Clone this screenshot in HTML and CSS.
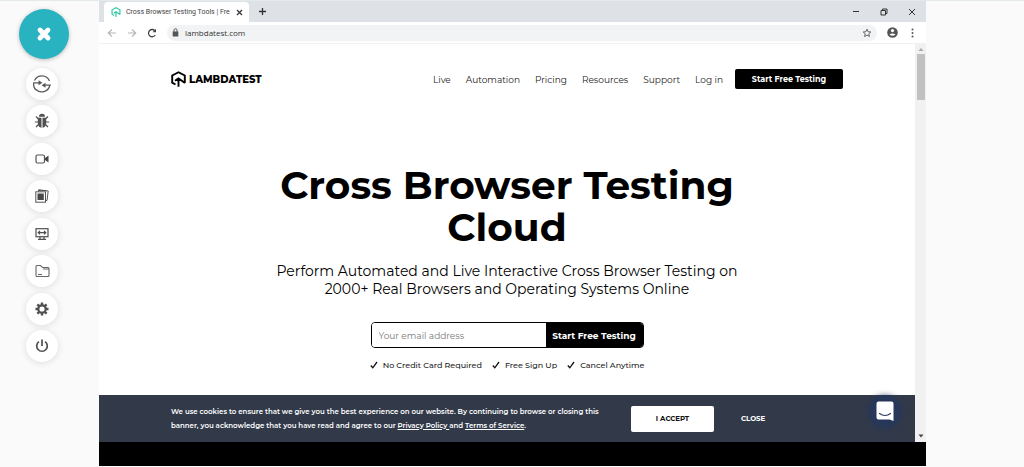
FILE: index.html
```html
<!DOCTYPE html>
<html lang="en">
<head>
<meta charset="utf-8">
<meta name="viewport" content="width=device-width, initial-scale=1">
<title>Live testing session</title>
<link rel="stylesheet" href="styles.css">
</head>
<body>
<div class="session">
  <aside class="rail">
    <button class="toggle" aria-label="Close menu"><svg width="16" height="16" viewBox="0 0 16 16"><path d="M4 4l8 8M12 4l-8 8" stroke="#fff" stroke-width="4.800" stroke-linecap="round"/></svg></button>
    <div class="tools">
      <button class="tool" aria-label="Switch"><svg width="20" height="20" viewBox="0 0 20 20" fill="none" stroke="#5a5a5a" stroke-width="1.300"><path d="M2.500 6.500A8.200 8.200 0 0 1 17.500 7M1.200 8.800H7M18.800 11.200H13M1.700 9A8.200 8.200 0 0 0 4 16M17.800 11.500A8.200 8.200 0 0 1 4 15.500"/><path d="M6.500 6.300l4 2.500-4 2.500zM13.500 13.700l-4-2.500 4-2.500z" fill="#5a5a5a" stroke="none"/></svg></button>
      <button class="tool" aria-label="Report bug"><svg width="16" height="16" viewBox="0 0 16 16"><path d="M5 3.800a3 3 0 0 1 6 0zM3.800 4.700h3.700v10C5 14.500 3.800 12.500 3.800 10zM8.500 4.700h3.700V10c0 2.500-1.200 4.500-3.700 4.700z" fill="#505050"/><path d="M4.500 6L2 3.500M4 9H.8M4.500 11.500L2 14M11.500 6L14 3.500M12 9h3.200M11.500 11.500L14 14" stroke="#505050" stroke-width="1.200"/></svg></button>
      <button class="tool" aria-label="Record video"><svg width="14" height="14" viewBox="0 0 14 14"><rect x="1" y="3" width="8.500" height="8" rx="1.500" fill="none" stroke="#555" stroke-width="1.200"/><path d="M10 6l3.500-2.500v7L10 8z" fill="#484848"/></svg></button>
      <button class="tool" aria-label="Gallery"><svg width="14" height="14" viewBox="0 0 14 14" fill="none" stroke="#555"><path d="M3.500 2.500V.8L13.200 2 12 11.500h-1M3 1.500h8.500"/><rect x=".8" y="2.800" width="9.700" height="10.400"/><path d="M2.500 4.500h6.300v6.500H2.500z" fill="#484848" stroke="none"/></svg></button>
      <button class="tool" aria-label="Resolution"><svg width="14" height="14" viewBox="0 0 14 14" fill="none" stroke="#505050" stroke-width="1.200"><rect x="1" y="1.700" width="12" height="8"/><path d="M3 5.700h8M5 4L3.200 5.700 5 7.400M9 4l1.800 1.700L9 7.400M5 9.500v2.300M9 9.500v2.300M3 12.300h8"/></svg></button>
      <button class="tool" aria-label="Files"><svg width="15" height="14" viewBox="0 0 15 14" fill="none" stroke="#666" stroke-width="1.100"><path d="M1 11.500V2.500q0-1 1-1h3.500l2 2h5.500q1 0 1 1v7q0 1-1 1H2q-1 0-1-1zM8 5h5.500M3 10.500h4"/></svg></button>
      <button class="tool" aria-label="Settings"><svg width="14" height="14" viewBox="0 0 14 14" fill="none" stroke="#505050"><circle cx="7" cy="7" r="3.700" stroke-width="2.200"/><path d="M7 .5v2.500M7 11v2.500M.5 7H3M11 7h2.500M2.400 2.400l1.800 1.800M9.800 9.800l1.800 1.800M11.600 2.400L9.800 4.200M4.200 9.800l-1.800 1.800" stroke-width="2.400"/></svg></button>
      <button class="tool" aria-label="End session"><svg width="14" height="14" viewBox="0 0 14 14" fill="none" stroke="#505050" stroke-width="1.700"><path d="M4 2.600a5.300 5.300 0 1 0 6 0M7 .5v6.500"/></svg></button>
    </div>
  </aside>

  <div class="browser">
    <div class="tabstrip">
      <div class="tab">
        <svg width="10" height="10" viewBox="0 0 15 16" fill="none" stroke="#35c9a5" stroke-width="2"><path d="M4.500 13.500L1.200 11.600V4.500L7.500 1.200l6.300 3.300v7.500M7.500 15.800V8M4 9.800l3.500-2.300 6.500 4.500"/></svg>
        <span class="tab-title">Cross Browser Testing Tools | Fre</span>
        <button class="plain" aria-label="Close tab"><svg width="7" height="7" viewBox="0 0 7 7"><path d="M1 1l5 5M6 1L1 6" stroke="#333" stroke-width="1.200"/></svg></button>
      </div>
      <button class="plain new-tab" aria-label="New tab"><svg width="9" height="9" viewBox="0 0 9 9"><path d="M4.500 1v7M1 4.500h7" stroke="#333" stroke-width="1.300"/></svg></button>
      <div class="window-controls">
        <button class="plain" aria-label="Minimize"><svg width="8" height="8" viewBox="0 0 8 8"><path d="M1 3.500h6" stroke="#333"/></svg></button>
        <button class="plain" aria-label="Restore"><svg width="8" height="8" viewBox="0 0 8 8" fill="none" stroke="#333"><path d="M1 2.500h4.500v4.500H1zM2.500 2.500V1H7v4.500H5.500"/></svg></button>
        <button class="plain" aria-label="Close"><svg width="8" height="8" viewBox="0 0 8 8"><path d="M1 1l6 6M7 1L1 7" stroke="#333"/></svg></button>
      </div>
    </div>
    <div class="toolbar">
      <button class="plain" aria-label="Back"><svg width="10" height="10" viewBox="0 0 10 10" fill="none" stroke="#b5b5b5" stroke-width="1.200"><path d="M9 5H1.500M5 1.300L1.300 5 5 8.700"/></svg></button>
      <button class="plain" aria-label="Forward"><svg width="10" height="10" viewBox="0 0 10 10" fill="none" stroke="#b5b5b5" stroke-width="1.200"><path d="M1 5h7.500M5 1.300L8.700 5 5 8.700"/></svg></button>
      <button class="plain" aria-label="Reload"><svg width="10" height="10" viewBox="0 0 10 10"><path d="M8.200 7A3.600 3.600 0 1 1 7.800 2.700" fill="none" stroke="#444" stroke-width="1.300"/><path d="M9 .8v3.400H5.600z" fill="#444"/></svg></button>
      <div class="address">
        <svg width="7" height="9" viewBox="0 0 7 9"><rect x=".7" y="3.500" width="5.600" height="5" fill="#555"/><path d="M2 4V2.300a1.500 1.500 0 0 1 3 0V4" fill="none" stroke="#555"/></svg>
        <input class="url" type="text" value="lambdatest.com" aria-label="Address">
        <button class="plain" aria-label="Bookmark"><svg width="10" height="10" viewBox="0 0 10 10"><path d="M5 1.200l1.100 2.500 2.700.3-2 1.800.6 2.700L5 7.100 2.600 8.500l.6-2.700-2-1.800 2.700-.3z" fill="none" stroke="#555" stroke-width=".9"/></svg></button>
      </div>
      <div class="toolbar-end">
        <button class="plain" aria-label="Profile"><svg width="11" height="11" viewBox="0 0 11 11"><circle cx="5.500" cy="5.500" r="5.300" fill="#555"/><circle cx="5.500" cy="3.600" r="1.600" fill="#fff"/><path d="M2.500 7.500q3-2 6 0-3 2.500-6 0" fill="#fff"/></svg></button>
        <button class="plain" aria-label="Menu"><svg width="3" height="10" viewBox="0 0 3 10" fill="#555"><circle cx="1.500" cy="1.500" r="1"/><circle cx="1.500" cy="5" r="1"/><circle cx="1.500" cy="8.500" r="1"/></svg></button>
      </div>
    </div>

    <div class="viewport">
      <div class="page">
        <header class="wrap header">
          <a class="logo" href="#"><svg width="15" height="16" viewBox="0 0 15 16" fill="none" stroke="#000" stroke-width="1.900"><path d="M4.500 13.500L1.200 11.600V4.500L7.500 1.200l6.300 3.300v7.500M7.500 15.800V8M4 9.800l3.500-2.300 6.500 4.500"/></svg>LAMBDATEST</a>
          <nav class="nav">
            <a href="#">Live</a><a href="#">Automation</a><a href="#">Pricing</a><a href="#">Resources</a><a href="#">Support</a><a href="#">Log in</a>
          </nav>
          <a class="cta" href="#">Start Free Testing</a>
        </header>
        <main class="hero">
          <h1>Cross Browser Testing<br>Cloud</h1>
          <p class="lead">Perform Automated and Live Interactive Cross Browser Testing on<br>2000+ Real Browsers and Operating Systems Online</p>
          <form class="signup">
            <input type="email" placeholder="Your email address" aria-label="Your email address">
            <button type="button">Start Free Testing</button>
          </form>
          <ul class="perks">
            <li><svg width="8" height="8" viewBox="0 0 8 8"><path d="M.8 4.500l2 2.300L7 1" fill="none" stroke="#111" stroke-width="1.300"/></svg>No Credit Card Required</li>
            <li><svg width="8" height="8" viewBox="0 0 8 8"><path d="M.8 4.500l2 2.300L7 1" fill="none" stroke="#111" stroke-width="1.300"/></svg>Free Sign Up</li>
            <li><svg width="8" height="8" viewBox="0 0 8 8"><path d="M.8 4.500l2 2.300L7 1" fill="none" stroke="#111" stroke-width="1.300"/></svg>Cancel Anytime</li>
          </ul>
        </main>
        <section class="cookies">
          <div class="wrap cookie-row">
            <p>We use cookies to ensure that we give you the best experience on our website. By continuing to browse or closing this<br>banner, you acknowledge that you have read and agree to our <a href="#">Privacy Policy </a>and <a href="#">Terms of Service</a>.</p>
            <button class="accept">I ACCEPT</button>
            <button class="dismiss">CLOSE</button>
          </div>
        </section>
        <button class="chat" aria-label="Open chat"><svg width="18" height="20" viewBox="0 0 18 20"><path d="M2.500.5h13q2 0 2 2V20l-4-1.500h-11q-2 0-2-2v-14q0-2 2-2z" fill="#fff"/><path d="M3.500 12.500q5.500 4 11 0" fill="none" stroke="#27375a" stroke-width="1.200" stroke-linecap="round"/></svg></button>
      </div>
      <div class="scrollbar">
        <svg width="6" height="4" viewBox="0 0 6 4"><path d="M3 0l2.500 3h-5z" fill="#aaa"/></svg>
        <div class="thumb"></div>
        <svg class="down" width="6" height="4" viewBox="0 0 6 4"><path d="M3 3.500L5.500.5h-5z" fill="#444"/></svg>
      </div>
    </div>
    <div class="letterbox"></div>
  </div>
</div>
</body>
</html>
```
FILE: styles.css
```css
* { box-sizing: border-box; }
body {
  margin: 0;
  background: #fafafa;
  font-family: Montserrat, Inter, "Open Sans", sans-serif;
  color: #000;
}
button, input { font: inherit; color: inherit; margin: 0; padding: 0; border: 0; }
a { color: inherit; text-decoration: none; }
svg { display: block; flex: none; }

.session {
  display: grid;
  grid-template-columns: 99px 1fr 98px;
  min-height: 100vh;
  border-top: 1px solid #e4e9eb;
  padding-bottom: 1px;
}

/* Session tool rail */
.rail { padding: 8px 0 0 19px; }
.toggle {
  display: grid;
  place-items: center;
  width: 50px;
  height: 50px;
  border-radius: 50%;
  background: #29b2bf;
  box-shadow: 0 1px 4px rgba(0, 0, 0, .25);
}
.tools {
  display: flex;
  flex-direction: column;
  justify-content: space-between;
  width: 46px;
  height: 294px;
  margin-top: 9px;
  align-items: center;
}
.tool {
  display: grid;
  place-items: center;
  width: 32px;
  height: 32px;
  border-radius: 50%;
  background: #fff;
  box-shadow: 0 1px 7px rgba(0, 0, 0, .12);
}

/* Browser frame */
.browser { display: flex; flex-direction: column; min-width: 0; }
.plain { display: grid; place-items: center; background: none; }
.tabstrip {
  display: flex;
  align-items: center;
  height: 21px;
  padding: 0 10px 0 5px;
  background: #dee1e6;
}
.tab {
  display: flex;
  align-items: center;
  gap: 5px;
  align-self: flex-end;
  width: 145px;
  height: 20px;
  padding: 0 6px 0 7px;
  border-radius: 4px 4px 0 0;
  background: #fff;
}
.tab-title {
  flex: 1;
  white-space: nowrap;
  font: 7px Roboto, sans-serif;
  color: #444;
}
.new-tab { margin-left: 9px; }
.window-controls { display: flex; gap: 20px; margin-left: auto; }
.toolbar {
  display: flex;
  align-items: center;
  gap: 10px;
  height: 22px;
  padding: 0 12px 0 8px;
  background: #fff;
  border-bottom: 1px solid #f0f1f2;
}
.toolbar-end { display: flex; align-items: center; gap: 13px; }
.address {
  display: flex;
  align-items: center;
  flex: 1;
  gap: 6px;
  height: 16px;
  padding: 0 5px;
  border-radius: 8px;
  background: #f1f3f4;
}
.url { flex: 1; min-width: 0; background: none; font: 8px "Open Sans", sans-serif; color: #333; }

/* Web page */
.viewport { display: flex; flex: 1; background: #fff; }
.page { position: relative; display: flex; flex: 1; flex-direction: column; min-width: 0; }
.wrap { width: 100%; max-width: 672px; margin: 0 auto; }
.header { display: flex; align-items: center; padding-top: 25px; font-size: 9px; }
.logo { display: flex; align-items: center; gap: 3px; font-size: 10px; font-weight: 800; }
.nav { display: flex; gap: 15px; margin-left: auto; color: #222; }
.cta {
  width: 108px;
  margin-left: 12px;
  border-radius: 2px;
  background: #000;
  color: #fff;
  font-size: 8px;
  font-weight: 700;
  line-height: 20px;
  text-align: center;
}
.hero { flex: 1; padding-top: 75px; text-align: center; }
h1 { margin: 0; font-size: 39px; line-height: 42px; font-weight: 700; }
.lead { margin: 14px 0 24px; font-size: 14px; line-height: 18px; color: #000; }
.signup {
  display: flex;
  width: 273px;
  height: 26px;
  margin: 0 auto;
  overflow: hidden;
  border: 1px solid #000;
  border-radius: 4px;
  font-size: 9px;
}
.signup input { flex: 1; min-width: 0; padding: 0 7px; background: #fff; }
.signup input::placeholder { color: #777; opacity: 1; }
.signup button { width: 97px; background: #000; color: #fff; font-weight: 700; }
.perks {
  display: flex;
  justify-content: center;
  gap: 10px;
  margin: 11px 0;
  padding: 0;
  list-style: none;
  font-size: 8px;
  font-weight: 500;
  line-height: 12px;
  color: #222;
}
.perks li { display: flex; align-items: center; gap: 5px; }
.cookies { background: #323a4a; color: #fff; font-size: 7px; font-weight: 600; }
.cookie-row { display: flex; align-items: center; height: 47px; }
.cookie-row p { width: 444px; margin: 0; line-height: 14px; }
.cookie-row p a { text-decoration: underline; }
.accept, .dismiss { font-size: 7px; font-weight: 700; }
.accept { width: 83px; height: 26px; margin-left: 16px; border-radius: 2px; background: #fff; color: #111; }
.dismiss { margin-left: 27px; background: none; }
.chat {
  position: absolute;
  right: 14px;
  bottom: 15px;
  display: grid;
  place-items: center;
  width: 32px;
  height: 32px;
  border-radius: 50%;
  background: #27375a;
  box-shadow: 0 1px 6px #27375a;
}
.scrollbar {
  display: flex;
  flex-direction: column;
  align-items: center;
  width: 11px;
  padding: 4px 0;
  background: #f1f1f1;
}
.thumb { width: 8px; height: 46px; margin-top: 2px; background: #c1c1c1; }
.down { margin-top: auto; }
.letterbox { height: 24px; background: #000; }
```
